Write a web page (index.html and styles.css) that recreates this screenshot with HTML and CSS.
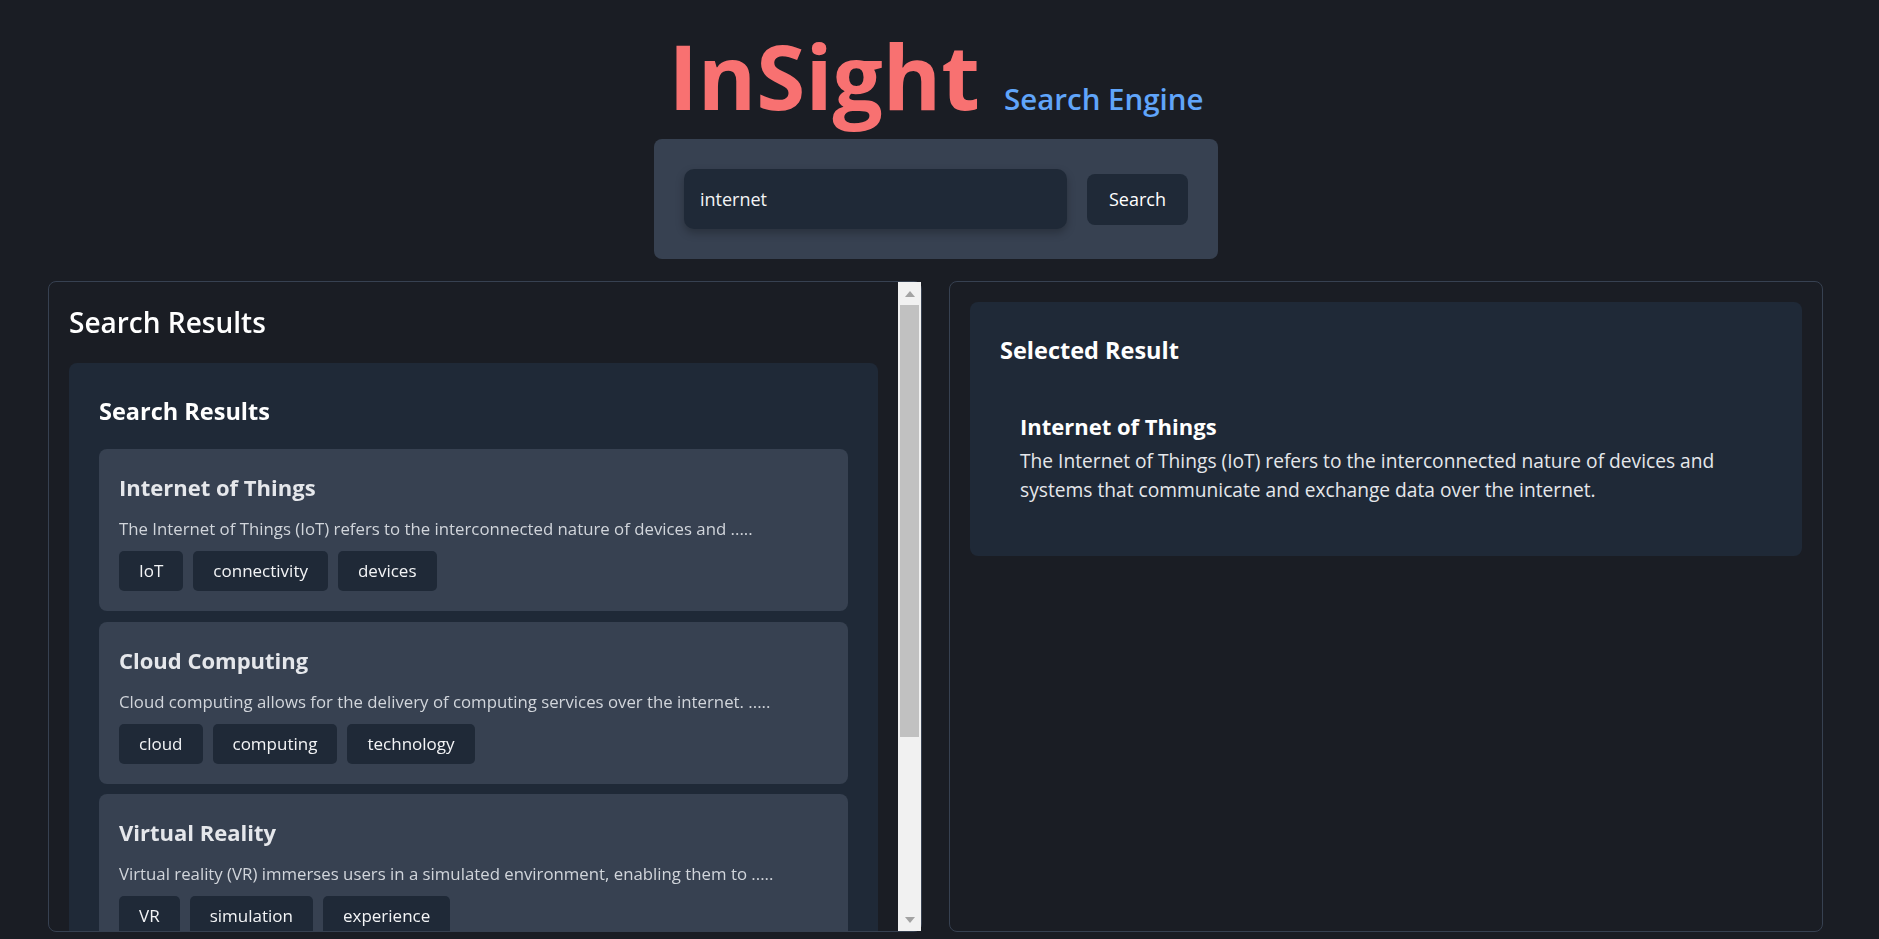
FILE: index.html
```html
<!DOCTYPE html>
<html lang="en">
<head>
<meta charset="utf-8">
<title>InSight Search Engine</title>
<link rel="stylesheet" href="styles.css">
</head>
<body>
<header class="header">
  <h1 class="brand"><span class="brand-name">InSight</span><span class="brand-sub">Search Engine</span></h1>
  <form class="search-box">
    <input class="search-input" type="text" value="internet" autofocus>
    <button class="search-btn" type="button">Search</button>
  </form>
</header>
<main class="layout">
  <section class="panel panel-results">
    <div class="scroll-area">
      <h2 class="panel-title">Search Results</h2>
      <div class="card">
        <h3 class="card-title">Search Results</h3>
        <ul class="result-list">
          <li class="result">
            <h4 class="result-title">Internet of Things</h4>
            <p class="result-desc">The Internet of Things (IoT) refers to the interconnected nature of devices and .....</p>
            <div class="tags"><span class="tag">IoT</span><span class="tag">connectivity</span><span class="tag">devices</span></div>
          </li>
          <li class="result">
            <h4 class="result-title">Cloud Computing</h4>
            <p class="result-desc">Cloud computing allows for the delivery of computing services over the internet. .....</p>
            <div class="tags"><span class="tag">cloud</span><span class="tag">computing</span><span class="tag">technology</span></div>
          </li>
          <li class="result">
            <h4 class="result-title">Virtual Reality</h4>
            <p class="result-desc">Virtual reality (VR) immerses users in a simulated environment, enabling them to .....</p>
            <div class="tags"><span class="tag">VR</span><span class="tag">simulation</span><span class="tag">experience</span></div>
          </li>
          <li class="result">
            <h4 class="result-title">Cybersecurity</h4>
            <p class="result-desc">Cybersecurity protects systems, networks and data connected to the internet from .....</p>
            <div class="tags"><span class="tag">security</span><span class="tag">networks</span><span class="tag">privacy</span></div>
          </li>
        </ul>
      </div>
    </div>
    <div class="scrollbar" aria-hidden="true">
      <span class="sb-btn sb-up"></span>
      <span class="sb-thumb"></span>
      <span class="sb-track"></span>
      <span class="sb-btn sb-down"></span>
    </div>
  </section>
  <section class="panel panel-detail">
    <div class="card">
      <h3 class="card-title">Selected Result</h3>
      <div class="detail">
        <h4 class="result-title detail-title">Internet of Things</h4>
        <p class="detail-desc">The Internet of Things (IoT) refers to the interconnected nature of devices and systems that communicate and exchange data over the internet.</p>
      </div>
    </div>
  </section>
</main>
</body>
</html>
```
FILE: styles.css
```css
* { box-sizing: border-box; }

html, body {
  margin: 0;
  background: #1a1d24;
  font-family: "Open Sans", "Noto Sans", "Liberation Sans", sans-serif;
  color: #e5e7eb;
}

body { height: 939px; overflow: hidden; }

.header {
  display: flex;
  flex-direction: column;
  align-items: center;
  padding: 31px 7px 0 0;
}

.brand {
  margin: 0 0 19px;
  display: flex;
  align-items: baseline;
  gap: 24px;
  line-height: 1;
}

.brand-name {
  font-size: 89px;
  font-weight: 700;
  color: #f87171;
}

.brand-sub {
  font-size: 29.5px;
  font-weight: 600;
  color: #60a5fa;
}

.search-box {
  display: flex;
  align-items: center;
  gap: 20px;
  padding: 30px;
  background: #374151;
  border-radius: 8px;
  margin: 0;
}

.search-input {
  width: 383px;
  height: 60px;
  padding: 0 16px;
  border: none;
  border-radius: 10px;
  background: #1f2937;
  color: #f3f4f6;
  font-family: inherit;
  font-size: 18px;
  outline: none;
  caret-color: #ffffff;
  box-shadow: 0 4px 8px rgba(0, 0, 0, 0.25);
}

.search-btn {
  height: 51px;
  padding: 0 22px;
  border: none;
  border-radius: 8px;
  background: #1f2937;
  color: #ffffff;
  font-family: inherit;
  font-size: 18px;
  cursor: pointer;
}

.layout {
  display: grid;
  grid-template-columns: 1fr 1fr;
  gap: 27px;
  padding: 22px 56px 0 48px;
}

.panel {
  height: 651px;
  border: 1px solid #374151;
  border-radius: 8px;
}

.panel-results {
  display: flex;
}

.panel-detail {
  padding: 20px;
}

.scroll-area {
  flex: 1;
  min-width: 0;
  padding: 20px 20px 0;
  overflow: hidden;
}

.scrollbar {
  flex: none;
  width: 23px;
  background: #f1f1f1;
  display: flex;
  flex-direction: column;
}

.sb-btn {
  height: 23px;
  flex: none;
  display: flex;
  align-items: center;
  justify-content: center;
}

.sb-up::before,
.sb-down::before {
  content: "";
  width: 0;
  height: 0;
  border-left: 5.5px solid transparent;
  border-right: 5.5px solid transparent;
}

.sb-up::before { border-bottom: 6px solid #a3a3a3; }
.sb-down::before { border-top: 6px solid #a3a3a3; }

.sb-thumb {
  flex: none;
  height: 432px;
  margin: 0 2px;
  background: #c1c1c1;
}

.sb-track { flex: 1; }

.panel-title {
  margin: 0 0 21px;
  font-size: 28px;
  line-height: 40px;
  font-weight: 600;
  color: #ffffff;
}

.card {
  background: #1f2937;
  border-radius: 8px;
  padding: 32px 30px 31px;
}

.card-title {
  margin: 0 0 22px;
  font-size: 23.5px;
  line-height: 32px;
  font-weight: 700;
  color: #ffffff;
}

.result-list {
  list-style: none;
  margin: 0;
  padding: 0;
  display: flex;
  flex-direction: column;
  gap: 10.5px;
}

.result {
  background: #374151;
  border-radius: 8px;
  padding: 20px;
}

.result-title {
  margin: 0;
  font-size: 22px;
  line-height: 36px;
  font-weight: 700;
  color: #e5e7eb;
}

.result-desc {
  margin: 12px 0 10px;
  font-size: 16.8px;
  line-height: 24px;
  color: #d1d5db;
}

.tags {
  display: flex;
  gap: 10px;
}

.tag {
  background: #1f2937;
  border-radius: 5px;
  padding: 8px 20px;
  font-size: 17px;
  line-height: 24px;
  color: #f3f4f6;
}

.detail {
  padding: 20px;
}

.detail-title { color: #ffffff; }

.detail-desc {
  margin: 2px 0 0;
  font-size: 19.2px;
  line-height: 29.25px;
  color: #e5e7eb;
}
```
